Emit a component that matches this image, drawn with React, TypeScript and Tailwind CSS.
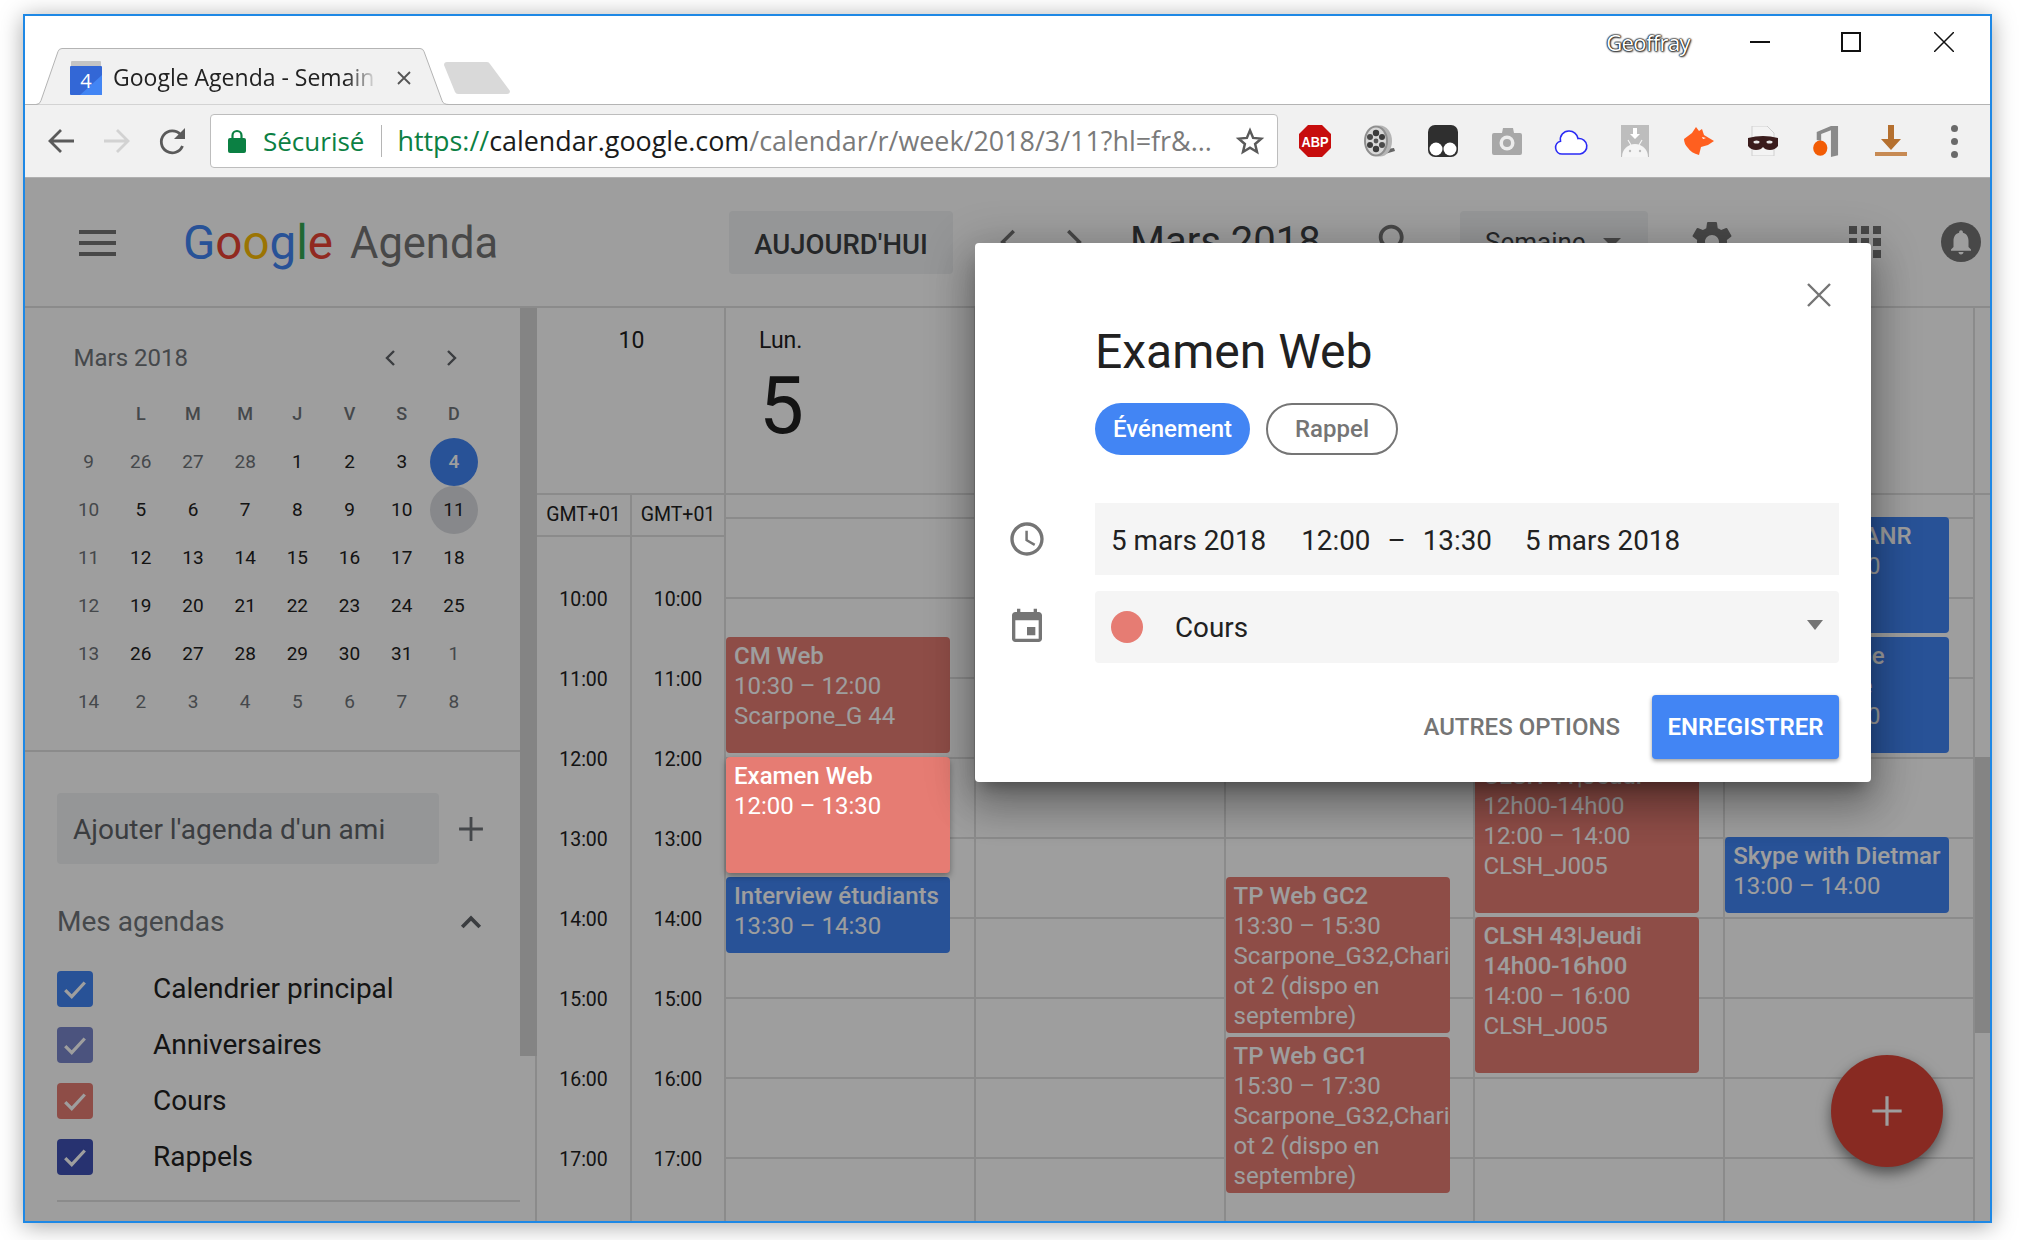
import React from 'react';

const Icon = ({ d, size = 24, className = '' }: { d: string; size?: number; className?: string }) => (
  <svg width={size} height={size} viewBox="0 0 24 24" fill="currentColor" className={className}>
    <path d={d} />
  </svg>
);

const CLOCK = 'M11.99 2C6.47 2 2 6.48 2 12s4.47 10 9.99 10C17.52 22 22 17.52 22 12S17.52 2 11.99 2zM12 20c-4.42 0-8-3.58-8-8s3.58-8 8-8 8 3.58 8 8-3.58 8-8 8zm.5-13H11v6l5.25 3.15.75-1.23-4.5-2.67z';
const EVENT = 'M17 12h-5v5h5v-5zM16 1v2H8V1H6v2H5c-1.11 0-1.99.9-1.99 2L3 19c0 1.1.89 2 2 2h14c1.1 0 2-.9 2-2V5c0-1.1-.9-2-2-2h-1V1h-2zm3 18H5V8h14v11z';
const GEAR = 'M19.43 12.98c.04-.32.07-.64.07-.98s-.03-.66-.07-.98l2.11-1.65c.19-.15.24-.42.12-.64l-2-3.46c-.12-.22-.39-.3-.61-.22l-2.49 1c-.52-.4-1.08-.73-1.69-.98l-.38-2.65C14.46 2.18 14.25 2 14 2h-4c-.25 0-.46.18-.49.42l-.38 2.65c-.61.25-1.17.59-1.69.98l-2.49-1c-.23-.09-.49 0-.61.22l-2 3.46c-.13.22-.07.49.12.64l2.11 1.65c-.04.32-.07.65-.07.98s.03.66.07.98l-2.11 1.65c-.19.15-.24.42-.12.64l2 3.46c.12.22.39.3.61.22l2.49-1c.52.4 1.08.73 1.69.98l.38 2.65c.03.24.24.42.49.42h4c.25 0 .46-.18.49-.42l.38-2.65c.61-.25 1.17-.59 1.69-.98l2.49 1c.23.09.49 0 .61-.22l2-3.46c.12-.22.07-.49-.12-.64l-2.01-1.65zM12 15.5c-1.93 0-3.5-1.57-3.5-3.5s1.57-3.5 3.5-3.5 3.5 1.57 3.5 3.5-1.57 3.5-3.5 3.5z';
const SEARCH = 'M15.5 14h-.79l-.28-.27C15.41 12.59 16 11.11 16 9.5 16 5.91 13.09 3 9.5 3S3 5.91 3 9.5 5.91 16 9.5 16c1.61 0 3.09-.59 4.23-1.57l.27.28v.79l5 4.99L20.49 19l-4.99-5zm-6 0C7.01 14 5 11.99 5 9.5S7.01 5 9.5 5 14 7.01 14 9.5 11.99 14 9.5 14z';
const BELL = 'M12 22c1.1 0 2-.9 2-2h-4c0 1.1.9 2 2 2zm6-6v-5c0-3.07-1.63-5.64-4.5-6.32V4c0-.83-.67-1.5-1.5-1.5s-1.5.67-1.5 1.5v.68C7.64 5.36 6 7.92 6 11v5l-2 2v1h16v-1l-2-2z';

const Chevron = ({ dir, size = 20, width = 2, className = '' }: { dir: 'left' | 'right' | 'up'; size?: number; width?: number; className?: string }) => {
  const pts = dir === 'left' ? '15,5 8,12 15,19' : dir === 'right' ? '9,5 16,12 9,19' : '5,16 12,9 19,16';
  return (
    <svg width={size} height={size} viewBox="0 0 24 24" fill="none" stroke="currentColor" strokeWidth={width} className={className}>
      <polyline points={pts} />
    </svg>
  );
};

const Plus = ({ size, width, className = '' }: { size: number; width: number; className?: string }) => (
  <svg width={size} height={size} viewBox="0 0 24 24" fill="none" stroke="currentColor" strokeWidth={width} className={className}>
    <path d="M12 1v22M1 12h22" />
  </svg>
);

// Browser extension icons
const Extensions = () => (
  <>
    <div className="w-[64px] flex justify-center">
      <svg width="32" height="32" viewBox="0 0 32 32">
        <polygon points="9,0 23,0 32,9 32,23 23,32 9,32 0,23 0,9" fill="#c70d0d" />
        <text x="16" y="22" textAnchor="middle" fontFamily="Liberation Sans, sans-serif" fontWeight="700" fontSize="15" fill="#fff" textLength="27" lengthAdjust="spacingAndGlyphs">ABP</text>
      </svg>
    </div>
    <div className="w-[64px] flex justify-center">
      <svg width="32" height="34" viewBox="0 0 32 34">
        <path d="M22 30 L32 27 L31 24 L24 25Z" fill="#666" />
        <ellipse cx="17" cy="17" rx="12" ry="15.500" fill="#b5b5b5" />
        <ellipse cx="13" cy="17" rx="12" ry="15.500" fill="#8f8f8f" />
        <ellipse cx="13" cy="17" rx="10" ry="13.500" fill="#d8d8d8" />
        <circle cx="13" cy="17" r="2.400" fill="#555" />
        <circle cx="13" cy="9" r="3.200" fill="#3c3c3c" />
        <circle cx="13" cy="25" r="3.200" fill="#3c3c3c" />
        <circle cx="7" cy="13" r="3" fill="#4a4a4a" />
        <circle cx="19" cy="13" r="3" fill="#3c3c3c" />
        <circle cx="7" cy="21" r="3" fill="#3c3c3c" />
        <circle cx="19" cy="21" r="3" fill="#4a4a4a" />
      </svg>
    </div>
    <div className="w-[64px] flex justify-center">
      <svg width="30" height="32" viewBox="0 0 30 32">
        <rect width="30" height="32" rx="7" fill="#2f2f2f" />
        <circle cx="8" cy="24" r="6.500" fill="#fff" />
        <circle cx="22" cy="24" r="6.500" fill="#fff" />
      </svg>
    </div>
    <div className="w-[64px] flex justify-center">
      <svg width="30" height="30" viewBox="0 0 30 30">
        <path d="M11 2h10l1 5h6a2 2 0 0 1 2 2v18a2 2 0 0 1-2 2H2a2 2 0 0 1-2-2V9a2 2 0 0 1 2-2h8z" fill="#a8a8a8" />
        <circle cx="15" cy="17" r="7.500" fill="#ececec" />
        <circle cx="15" cy="17" r="4" fill="#a8a8a8" />
      </svg>
    </div>
    <div className="w-[64px] flex justify-center">
      <svg width="34" height="30" viewBox="0 0 34 30">
        <path d="M8 28a6.500 6.500 0 0 1-1.500-12.800A8.500 8.500 0 0 1 15 5a9 9 0 0 1 9 7.500A7.800 7.800 0 0 1 26 28z" fill="#fff" stroke="#2a2af5" strokeWidth="1.6" />
      </svg>
    </div>
    <div className="w-[64px] flex justify-center">
      <svg width="28" height="32" viewBox="0 0 28 32">
        <rect width="28" height="32" fill="#bdbdbd" />
        <path d="M12 3h4v6h3l-5 5-5-5h3z" fill="#fff" />
        <path d="M1 32a13 13 0 0 1 26 0z" fill="#f5f5f5" />
        <path d="M7 15l3 5M21 15l-3 5" stroke="#f5f5f5" strokeWidth="1.2" />
        <circle cx="9" cy="26" r="1.200" fill="#bdbdbd" />
        <circle cx="19" cy="26" r="1.200" fill="#bdbdbd" />
      </svg>
    </div>
    <div className="w-[64px] flex justify-center">
      <svg width="30" height="28" viewBox="0 0 30 28">
        <path d="M12 0L15 4L18 2L20 8L30 14L24 18L17 20L15 28Q7 26 4 21Q0 17 0 12L8 6Z" fill="#ff5f1f" />
        <path d="M18 10l4 1-3 1z" fill="#fff" />
      </svg>
    </div>
    <div className="w-[64px] flex justify-center">
      <svg width="30" height="30" viewBox="0 0 30 30">
        <path d="M4 0h15l7 7v23H4z" fill="#f3f3f3" stroke="#cfcfcf" strokeWidth="1" />
        <path d="M0 12q15-4 30 0v8q-3 4-8 4-5 0-7-3-2 3-7 3-5 0-8-4z" fill="#3a1c1c" />
        <ellipse cx="8.500" cy="16" rx="3" ry="1.500" fill="#e8e8e8" />
        <ellipse cx="21.500" cy="16" rx="3" ry="1.500" fill="#e8e8e8" />
      </svg>
    </div>
    <div className="w-[64px] flex justify-center">
      <svg width="27" height="32" viewBox="0 0 30 36">
        <path d="M4 17V8L20 1h8v33l-8 2V6l-11 4v8z" fill="#8a8a8a" />
        <ellipse cx="8" cy="26" rx="8" ry="8.500" fill="#f25c05" />
      </svg>
    </div>
    <div className="w-[64px] flex justify-center">
      <svg width="32" height="32" viewBox="0 0 32 32">
        <path d="M13 0h6v14h7L16 25 6 14h7z" fill="#b5702f" />
        <rect x="0" y="27" width="32" height="4" fill="#c78a53" />
      </svg>
    </div>
    <div className="w-[64px] flex flex-col items-center gap-[6px]">
      <div className="w-[7px] h-[7px] rounded-full bg-[#6a6a6a]" />
      <div className="w-[7px] h-[7px] rounded-full bg-[#6a6a6a]" />
      <div className="w-[7px] h-[7px] rounded-full bg-[#6a6a6a]" />
    </div>
  </>
);

const BrowserChrome = () => (
  <>
    <div className="h-[89px] flex items-end border-b border-[#b4b4b4] shrink-0">
      <div className="relative w-[413px] h-[57px] -mb-px ml-[11px] shrink-0">
        <svg width="413" height="57" viewBox="0 0 413 57" className="absolute inset-0">
          <path d="M0 56.500q4 0 5-4L22 3.500q1-3 4-3H384q3 0 4 3L406 52.500q1 4 7 4z" fill="#f1f1f1" />
          <path d="M0 56.500q4 0 5-4L22 3.500q1-3 4-3H384q3 0 4 3L406 52.500q1 4 7 4" fill="none" stroke="#b4b4b4" />
        </svg>
        <div className="relative flex items-center h-[45px] mt-[7px] pl-[34px] [font-family:'Open_Sans',sans-serif]">
          <svg width="32" height="34" viewBox="0 0 32 34" className="shrink-0">
            <rect x="1" y="0" width="30" height="8" rx="1" fill="#c4c4c4" />
            <rect x="0" y="5" width="32" height="29" rx="1" fill="#3367d6" />
            <path d="M10 34l22-20v19a1 1 0 0 1-1 1z" fill="#4285f4" />
            <text x="16" y="27" textAnchor="middle" fontSize="20" fill="#fff" fontFamily="Open Sans, sans-serif">4</text>
          </svg>
          <div className="w-[265px] ml-[11px] whitespace-nowrap text-[23px] text-[#222] [mask-image:linear-gradient(to_right,black_88%,transparent)]">
            Google Agenda - Semain
          </div>
          <svg width="14" height="14" viewBox="0 0 14 14" className="ml-[19px] text-[#555]" stroke="currentColor" strokeWidth="1.8">
            <path d="M1 1l12 12M13 1L1 13" />
          </svg>
        </div>
      </div>
      <svg width="66" height="32" viewBox="0 0 66 32" className="-ml-[5px] mb-[10px] shrink-0">
        <path d="M3 0H43q2 0 3 2L66 29q0 3-3 3H14q-2 0-3-2L0 3q0-3 3-3z" fill="#d9d9d9" />
      </svg>
      <div className="flex-1" />
      <div className="self-start flex items-center h-[52px]">
        <span className="[font-family:'Open_Sans',sans-serif] text-[22px] tracking-[-0.6px] text-white [text-shadow:0_0_1px_#111,0_0_1.500px_#111,0_0_1.500px_#111,0_0_2px_#222,1px_1px_2px_#555] mr-[60px]">Geoffray</span>
        <svg width="20" height="20" viewBox="0 0 20 20" className="mr-[71px]" stroke="#111" strokeWidth="2"><path d="M0 10h20" /></svg>
        <svg width="20" height="20" viewBox="0 0 20 20" className="mr-[73px]" fill="none" stroke="#111" strokeWidth="2"><rect x="1" y="1" width="18" height="18" /></svg>
        <svg width="20" height="20" viewBox="0 0 20 20" className="mr-[36px]" stroke="#111" strokeWidth="1.500"><path d="M0 0l20 20M20 0L0 20" /></svg>
      </div>
    </div>
    <div className="h-[73px] bg-[#f1f1f1] border-b border-[#b0b0b0] flex items-center pl-[8px] shrink-0">
      <div className="w-[56px] flex justify-center text-[#5a5a5a]">
        <svg width="28" height="28" viewBox="0 0 28 28" fill="none" stroke="currentColor" strokeWidth="2.800"><path d="M27 14H3M14 3L3 14l11 11" /></svg>
      </div>
      <div className="w-[56px] flex justify-center text-[#d2d2d2]">
        <svg width="28" height="28" viewBox="0 0 28 28" fill="none" stroke="currentColor" strokeWidth="2.800"><path d="M1 14h24M14 3l11 11-11 11" /></svg>
      </div>
      <div className="w-[56px] flex justify-center text-[#5a5a5a]">
        <svg width="30" height="30" viewBox="0 0 30 30" fill="none" stroke="currentColor" strokeWidth="2.800"><path d="M24.500 20a11 11 0 1 1-2-11.500" /><path d="M27 2v11H16z" fill="currentColor" stroke="none" /></svg>
      </div>
      <div className="w-[1068px] h-[54px] ml-[9px] bg-white border border-[#bdbdbd] rounded-[4px] flex items-center shrink-0 [font-family:'Open_Sans',sans-serif]">
        <svg width="18" height="24" viewBox="0 0 18 24" className="ml-[17px] shrink-0">
          <path d="M4.500 10V6.500a4.500 4.500 0 0 1 9 0V10" fill="none" stroke="#0b8043" strokeWidth="2.200" />
          <rect x="0" y="9" width="18" height="15" rx="2" fill="#0b8043" />
        </svg>
        <span className="ml-[17px] text-[26px] text-[#0b8043] whitespace-nowrap">Sécurisé</span>
        <div className="w-px h-[32px] bg-[#b5b5b5] ml-[17px] shrink-0" />
        <div className="ml-[15px] text-[26.900px] whitespace-nowrap flex-1">
          <span className="text-[#0b8043]">https://</span>
          <span className="text-[#1a1a1a]">calendar.google.com</span>
          <span className="text-[#7a7a7a]">/calendar/r/week/2018/3/11?hl=fr&amp;...</span>
        </div>
        <svg width="30" height="30" viewBox="0 0 24 24" className="mr-[12px] shrink-0" fill="none" stroke="#5a5a5a" strokeWidth="2"><path d="M12 3.500l2.500 6 6.500.6-4.900 4.300 1.500 6.400-5.600-3.400-5.600 3.400 1.500-6.400L3 10.100l6.500-.6z" /></svg>
      </div>
      <div className="ml-[4.500px] flex items-center">
        <Extensions />
      </div>
    </div>
  </>
);

const AppHeader = () => (
  <div className="h-[130px] border-b-[2px] border-[#e0e0e0] flex items-center shrink-0 text-[#757575]">
    <div className="ml-[54px] w-[37px] pt-[2px] flex flex-col gap-[7px]">
      <div className="h-[4px] bg-[#757575]" />
      <div className="h-[4px] bg-[#757575]" />
      <div className="h-[4px] bg-[#757575]" />
    </div>
    <div className="ml-[67px] pt-[4px] text-[47.500px] leading-none whitespace-nowrap w-[167px]">
      <span className="text-[#4285f4]">G</span>
      <span className="text-[#ea4335]">o</span>
      <span className="text-[#fbbc05]">o</span>
      <span className="text-[#4285f4]">g</span>
      <span className="text-[#34a853]">l</span>
      <span className="text-[#ea4335]">e</span>
    </div>
    <div className="pt-[4px] text-[43.500px] leading-none w-[379px] whitespace-nowrap">Agenda</div>
    <div className="w-[224px] h-[63px] rounded-[4px] bg-[#f1f3f4] flex items-center justify-center pt-[5px] text-[27.500px] font-medium text-[#3c4043]">AUJOURD'HUI</div>
    <Chevron dir="left" size={38} width={2.200} className="ml-[37px]" />
    <Chevron dir="right" size={38} width={2.200} className="ml-[26px]" />
    <div className="ml-[38px] w-[243px] text-[40px] whitespace-nowrap text-[#3c4043]">Mars 2018</div>
    <Icon d={SEARCH} size={46} />
    <div className="ml-[41px] w-[188px] h-[63px] rounded-[4px] bg-[#f1f3f4] flex items-center pl-[25px] text-[26px] text-[#3c4043]">
      <span>Semaine</span>
      <span className="ml-[17px] w-0 h-0 border-x-[9px] border-x-transparent border-t-[9px] border-t-[#757575]" />
    </div>
    <Icon d={GEAR} size={48} className="ml-[40px]" />
    <div className="ml-[113px] grid grid-cols-3 gap-[4px]">
      {Array.from({ length: 9 }).map((_, i) => (
        <div key={i} className="w-[8px] h-[8px] bg-[#757575]" />
      ))}
    </div>
    <div className="ml-[60px] w-[40px] h-[40px] rounded-full bg-[#757575] flex items-center justify-center text-white">
      <Icon d={BELL} size={30} />
    </div>
  </div>
);

const MONTH = [
  ['9', '26', '27', '28', '1', '2', '3', '4'],
  ['10', '5', '6', '7', '8', '9', '10', '11'],
  ['11', '12', '13', '14', '15', '16', '17', '18'],
  ['12', '19', '20', '21', '22', '23', '24', '25'],
  ['13', '26', '27', '28', '29', '30', '31', '1'],
  ['14', '2', '3', '4', '5', '6', '7', '8'],
];

const AGENDAS = [
  { name: 'Calendrier principal', cls: 'bg-[#4285f4]' },
  { name: 'Anniversaires', cls: 'bg-[#7986cb]' },
  { name: 'Cours', cls: 'bg-[#e67c73]' },
  { name: 'Rappels', cls: 'bg-[#3f51b5]' },
];

const isOtherMonth = (r: number, c: number) => c === 0 || (r === 0 && c < 4) || (r === 4 && c === 7) || r === 5;

const Sidebar = () => (
  <div className="w-[512px] flex shrink-0 overflow-hidden">
    <div className="w-[495px]">
      <div className="h-[444px] border-b-[2px] border-[#e0e0e0] pt-[20px] pl-[37.500px]">
        <div className="h-[60px] flex items-center">
          <span className="ml-[11px] text-[24px] text-[#70757a] w-[305px]">Mars 2018</span>
          <Chevron dir="left" size={24} width={2.400} className="text-[#5f6368]" />
          <Chevron dir="right" size={24} width={2.400} className="ml-[36px] text-[#5f6368]" />
        </div>
        <div className="grid grid-cols-[repeat(8,52.2px)] grid-rows-[50px_repeat(6,48px)] text-[19px] items-center justify-items-center">
          {['', 'L', 'M', 'M', 'J', 'V', 'S', 'D'].map((d, i) => (
            <div key={i} className="font-medium text-[18px] text-[#70757a]">{d}</div>
          ))}
          {MONTH.map((row, r) =>
            row.map((d, c) => {
              const selected = r === 0 && c === 7;
              const today = r === 1 && c === 7;
              return (
                <div
                  key={`${r}-${c}`}
                  className={`w-[48px] h-[48px] rounded-full flex items-center justify-center ${
                    selected ? 'bg-[#4285f4] text-white font-medium' : today ? 'bg-[#dadce0] text-[#212121]' : isOtherMonth(r, c) ? 'text-[#70757a]' : 'text-[#212121]'
                  }`}
                >
                  {d}
                </div>
              );
            })
          )}
        </div>
      </div>
      <div className="flex items-center mt-[41px] ml-[32px]">
        <div className="w-[382px] h-[71px] bg-[#f1f3f4] rounded-[4px] flex items-center pl-[16px] pt-[3px] text-[28px] text-[#5f6368] whitespace-nowrap">Ajouter l'agenda d'un ami</div>
        <Plus size={26} width={2.600} className="ml-[19px] text-[#70757a]" />
      </div>
      <div className="flex items-center h-[60px] mt-[28px] ml-[32px]">
        <span className="text-[28px] text-[#70757a] w-[399px]">Mes agendas</span>
        <Chevron dir="up" size={30} width={3} className="text-[#5f6368]" />
      </div>
      <div className="ml-[32px] mt-[19px] pb-[25px] flex flex-col gap-[20px] border-b-[2px] border-[#e0e0e0]">
        {AGENDAS.map(a => (
          <div key={a.name} className="flex items-center h-[36px]">
            <div className={`w-[36px] h-[36px] rounded-[4px] flex items-center justify-center ${a.cls}`}>
              <svg width="26" height="26" viewBox="0 0 24 24" fill="none" stroke="#fff" strokeWidth="3"><path d="M3 13l6 6L21 6" /></svg>
            </div>
            <span className="ml-[60px] text-[28px] text-[#212121] whitespace-nowrap">{a.name}</span>
          </div>
        ))}
      </div>
    </div>
    <div className="w-[17px] border-r-[2px] border-[#e0e0e0]">
      <div className="w-[18px] h-[748px] bg-[#d6d6d6]" />
    </div>
  </div>
);

type Ev = { col: number; start: number; dur: number; lines: [string, boolean][]; cls: string; active?: boolean };

const RED = 'bg-[#e67c73]';
const BLUE = 'bg-[#4285f4]';
const ROOM_LINES: [string, boolean][] = [['Scarpone_G32,Chari', false], ['ot 2 (dispo en', false], ['septembre)', false]];

const EVENTS: Ev[] = [
  { col: 0, start: 10.5, dur: 1.5, cls: RED, lines: [['CM Web', true], ['10:30 – 12:00', false], ['Scarpone_G 44', false]] },
  { col: 0, start: 12, dur: 1.5, cls: RED, active: true, lines: [['Examen Web', true], ['12:00 – 13:30', false]] },
  { col: 0, start: 13.5, dur: 1, cls: BLUE, lines: [['Interview étudiants', true], ['13:30 – 14:30', false]] },
  { col: 2, start: 13.5, dur: 2, cls: RED, lines: [['TP Web GC2', true], ['13:30 – 15:30', false], ...ROOM_LINES] },
  { col: 2, start: 15.5, dur: 2, cls: RED, lines: [['TP Web GC1', true], ['15:30 – 17:30', false], ...ROOM_LINES] },
  { col: 3, start: 12, dur: 2, cls: RED, lines: [['CLSH 41|Jeudi', true], ['12h00-14h00', false], ['12:00 – 14:00', false], ['CLSH_J005', false]] },
  { col: 3, start: 14, dur: 2, cls: RED, lines: [['CLSH 43|Jeudi', true], ['14h00-16h00', true], ['14:00 – 16:00', false], ['CLSH_J005', false]] },
  { col: 4, start: 9, dur: 1.5, cls: BLUE, lines: [['Point projet ANR', true], ['09:00 – 10:30', false]] },
  { col: 4, start: 10.5, dur: 1.5, cls: BLUE, lines: [["Point d'équipe", true], ['de recherche', true], ['10:30 – 12:00', false]] },
  { col: 4, start: 13, dur: 1, cls: BLUE, lines: [['Skype with Dietmar', true], ['13:00 – 14:00', false]] },
];

const DAY_COLS = [0, 1, 2, 3, 4];
const HOURS = ['10:00', '11:00', '12:00', '13:00', '14:00', '15:00', '16:00', '17:00'];

const TimeColumn = ({ width }: { width: string }) => (
  <div className={`${width} shrink-0 border-r-[2px] border-[#e0e0e0]`}>
    <div className="h-[42px] border-b-[2px] border-[#e0e0e0] flex items-center justify-center text-[19.500px] text-[#212121]">GMT+01</div>
    <div className="mt-[23px]">
      {HOURS.map(h => (
        <div key={h} className="h-[80px] flex items-center justify-center text-[19.500px] text-[#212121]">{h}</div>
      ))}
    </div>
  </div>
);

const Grid = () => (
  <div className="flex-1 flex flex-col overflow-hidden">
    <div className="h-[187px] flex border-b-[2px] border-[#e0e0e0] shrink-0">
      <div className="w-[189px] border-r-[2px] border-[#e0e0e0] pt-[19px] pl-[2px] text-center text-[23px] leading-[28px] text-[#212121]">10</div>
      {DAY_COLS.map(col => (
        <div key={col} className="w-[249.800px] border-r-[2px] border-[#e0e0e0] pl-[33px] pt-[19px] text-[#212121]">
          {col === 0 && (
            <>
              <div className="text-[23px] leading-[28px]">Lun.</div>
              <div className="text-[80px] leading-[90px] mt-[6px]">5</div>
            </>
          )}
        </div>
      ))}
    </div>
    <div className="flex flex-1">
      <TimeColumn width="w-[95px]" />
      <TimeColumn width="w-[94px]" />
      {DAY_COLS.map(col => (
        <div key={col} className="relative w-[249.800px] border-r-[2px] border-[#e0e0e0] shrink-0">
          <div className="h-[24px] border-b-[2px] border-[#e0e0e0]" />
          {Array.from({ length: 9 }).map((_, i) => (
            <div key={i} className="h-[80px] border-b-[2px] border-[#e0e0e0]" />
          ))}
          {EVENTS.filter(e => e.col === col).map(e => (
            <div
              key={e.lines[0][0]}
              className={`absolute left-0 w-[224px] rounded-[4px] pl-[8px] pt-[4px] overflow-hidden text-[24px] leading-[30px] whitespace-nowrap text-white ${e.cls} ${e.active ? 'z-20 shadow-[0_3px_6px_rgba(0,0,0,0.35)]' : ''}`}
              style={{ top: 22 + (e.start - 9) * 80, height: e.dur * 80 - 4 }}
            >
              {e.lines.map(([t, bold], i) => (
                <div key={i} className={bold ? 'font-medium' : ''}>{t}</div>
              ))}
            </div>
          ))}
        </div>
      ))}
      <div className="w-[15px] pt-[262px]">
        <div className="h-[276px] bg-[#d6d6d6]" />
      </div>
    </div>
  </div>
);

const QuickAdd = () => (
  <div className="absolute z-30 left-[950px] top-[65px] w-[896px] h-[539px] bg-white rounded-[4px] pl-[120px] pr-[32px] pt-[79px] shadow-[0_24px_38px_3px_rgba(0,0,0,0.2),0_9px_46px_8px_rgba(0,0,0,0.2),0_11px_15px_-7px_rgba(0,0,0,0.3)]">
    <svg width="24" height="24" viewBox="0 0 24 24" className="absolute right-[40px] top-[40px]" stroke="#757575" strokeWidth="2.400"><path d="M1 1l22 22M23 1L1 23" /></svg>
    <div className="h-[60px] leading-[60px] text-[48px] text-[#212121]">Examen Web</div>
    <div className="mt-[21px] flex gap-[16px]">
      <div className="w-[155px] h-[52px] rounded-full bg-[#4285f4] flex items-center justify-center text-white text-[24px] font-medium">Événement</div>
      <div className="w-[132px] h-[52px] rounded-full border-[2px] border-[#757575] flex items-center justify-center text-[#757575] text-[24px] font-medium">Rappel</div>
    </div>
    <div className="mt-[48px] -ml-[88px] flex items-center">
      <div className="w-[40px] mr-[48px] shrink-0 text-[#757575]"><Icon d={CLOCK} size={40} /></div>
      <div className="flex-1 h-[72px] bg-[#f5f5f5] flex items-center pl-[16px] pt-[3px] text-[27.800px] text-[#212121]">
        <span>5 mars 2018</span>
        <span className="ml-[35px]">12:00</span>
        <span className="ml-[17px]">–</span>
        <span className="ml-[17px]">13:30</span>
        <span className="ml-[33px]">5 mars 2018</span>
      </div>
    </div>
    <div className="mt-[16px] -ml-[88px] flex items-center">
      <div className="w-[40px] mr-[48px] shrink-0 text-[#757575]"><Icon d={EVENT} size={40} /></div>
      <div className="flex-1 h-[72px] bg-[#f5f5f5] rounded-[4px] flex items-center pl-[16px] pr-[16px] text-[27.800px] text-[#212121]">
        <div className="w-[32px] h-[32px] rounded-full bg-[#e67c73]" />
        <span className="ml-[32px] flex-1 pt-[2px]">Cours</span>
        <span className="w-0 h-0 border-x-[8px] border-x-transparent border-t-[10px] border-t-[#757575] -mt-[4px]" />
      </div>
    </div>
    <div className="mt-[32px] flex items-center justify-end">
      <span className="text-[24px] font-medium text-[#757575] mr-[32px]">AUTRES OPTIONS</span>
      <div className="w-[187px] h-[64px] rounded-[4px] bg-[#4285f4] flex items-center justify-center text-white text-[24px] font-semibold shadow-[0_2px_4px_rgba(0,0,0,0.4)]">ENREGISTRER</div>
    </div>
  </div>
);

export default function App() {
  return (
    <div className="w-[2021px] h-[1240px] bg-white pt-[14px] pl-[23px] overflow-hidden [font-family:Roboto,sans-serif]">
      <div className="w-[1969px] h-[1209px] border-[2px] border-[#1e88e5] flex flex-col bg-white shadow-[0_3px_22px_rgba(0,0,0,0.35)]">
        <BrowserChrome />
        <div className="relative flex-1 flex flex-col bg-white overflow-hidden">
          <AppHeader />
          <div className="flex flex-1 overflow-hidden">
            <Sidebar />
            <Grid />
          </div>
          <div className="absolute right-[47px] bottom-[54px] w-[112px] h-[112px] rounded-full bg-[#db4437] flex items-center justify-center text-white shadow-[0_6px_14px_rgba(0,0,0,0.5)]">
            <Plus size={32} width={2.400} />
          </div>
          {/* Dim layer under the quick-add dialog */}
          <div className="absolute inset-0 z-10 bg-black/38" />
          <QuickAdd />
        </div>
      </div>
    </div>
  );
}
